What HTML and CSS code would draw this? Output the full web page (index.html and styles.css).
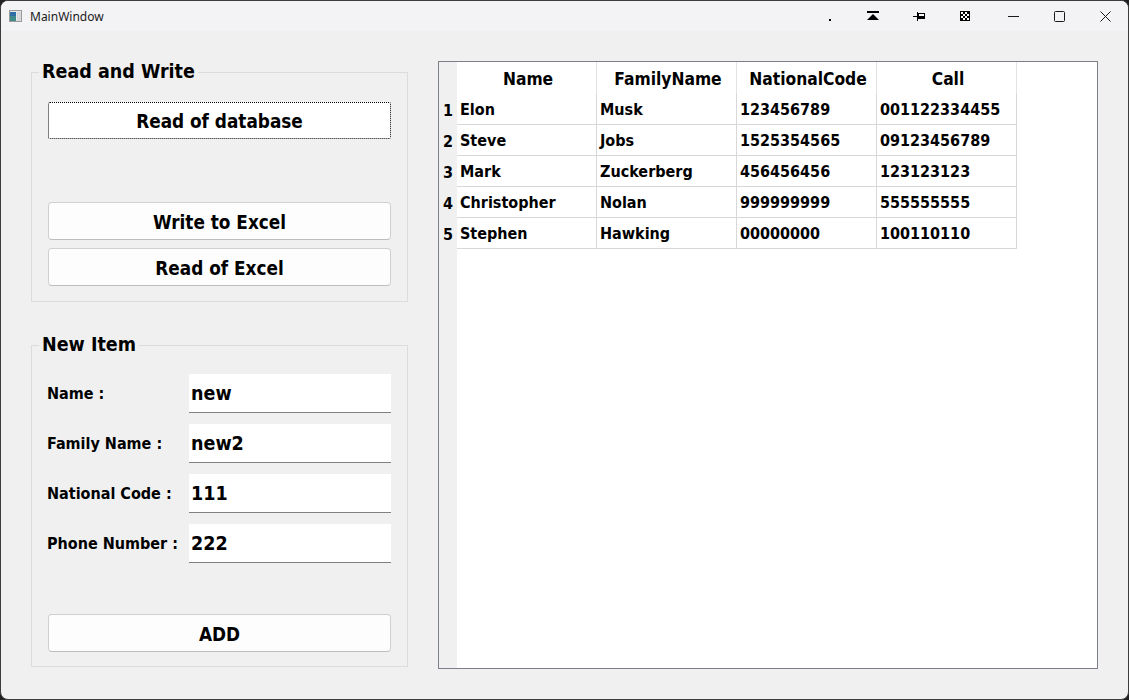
FILE: index.html
```html
<!DOCTYPE html>
<html>
<head>
<meta charset="utf-8">
<title>MainWindow</title>
<link rel="stylesheet" href="styles.css">
</head>
<body>
<div class="window">
  <div class="titlebar">
    <svg class="app-icon" width="13" height="12" viewBox="0 0 13 12">
      <rect x="0.5" y="0.5" width="12" height="11" fill="#e8e8e8" stroke="#9a9a9a"/>
      <rect x="1" y="2" width="6" height="9" fill="#3f8c8a"/>
      <rect x="1" y="2" width="6" height="4" fill="#2f6fa8"/>
      <rect x="8" y="2" width="4" height="9" fill="#d8d8d8"/>
    </svg>
    <span class="title">MainWindow</span>
    <div class="spacer"></div>
    <div class="tb-btn w40"><svg width="2" height="2" class="dot"><rect width="2" height="2" fill="#000"/></svg></div>
    <div class="tb-btn"><svg width="12" height="10" viewBox="0 0 12 10"><rect x="0" y="0" width="12" height="2" fill="#000"/><polygon points="6,3 12,9 0,9" fill="#000"/></svg></div>
    <div class="tb-btn"><svg width="12" height="9" viewBox="0 0 12 9"><rect x="0" y="4" width="4" height="1" fill="#000"/><rect x="4" y="0" width="1" height="9" fill="#000"/><rect x="5" y="1" width="7" height="6" fill="#000"/><rect x="6" y="2" width="5" height="2" fill="#fff"/></svg></div>
    <div class="tb-btn"><svg width="10" height="10" viewBox="0 0 10 10"><rect x="0" y="0" width="10" height="10" fill="#000"/><rect x="1" y="1" width="2" height="2" fill="#fff"/><rect x="5" y="1" width="2" height="2" fill="#fff"/><rect x="3" y="3" width="2" height="2" fill="#fff"/><rect x="7" y="3" width="2" height="2" fill="#fff"/><rect x="1" y="5" width="2" height="2" fill="#fff"/><rect x="5" y="5" width="2" height="2" fill="#fff"/><rect x="3" y="7" width="2" height="2" fill="#fff"/><rect x="7" y="7" width="2" height="2" fill="#fff"/></svg></div>
    <div class="tb-gap"></div>
    <div class="tb-btn"><svg width="11" height="11" viewBox="0 0 11 11"><line x1="0" y1="5.5" x2="11" y2="5.5" stroke="#1a1a1a" stroke-width="1"/></svg></div>
    <div class="tb-btn"><svg width="11" height="11" viewBox="0 0 11 11"><rect x="0.5" y="0.5" width="10" height="10" rx="1" fill="none" stroke="#1a1a1a" stroke-width="1"/></svg></div>
    <div class="tb-btn"><svg width="11" height="11" viewBox="0 0 11 11"><path d="M0.5 0.5 L10.5 10.5 M10.5 0.5 L0.5 10.5" stroke="#1a1a1a" stroke-width="1"/></svg></div>
  </div>
  <div class="content">
    <div class="left">
      <div class="group group-rw">
        <div class="group-title">Read and Write</div>
        <button class="btn focus">Read of database</button>
        <div class="btn-stack">
          <button class="btn">Write to Excel</button>
          <button class="btn">Read of Excel</button>
        </div>
      </div>
      <div class="group group-new">
        <div class="group-title">New Item</div>
        <div class="form">
          <div class="form-row"><span class="label">Name :</span><span class="input">new</span></div>
          <div class="form-row"><span class="label">Family Name :</span><span class="input">new2</span></div>
          <div class="form-row"><span class="label">National Code :</span><span class="input">111</span></div>
          <div class="form-row"><span class="label">Phone Number :</span><span class="input">222</span></div>
        </div>
        <button class="btn">ADD</button>
      </div>
    </div>
    <div class="table-view">
      <div class="grid">
        <div class="corner"></div>
        <div class="hcell">Name</div>
        <div class="hcell">FamilyName</div>
        <div class="hcell">NationalCode</div>
        <div class="hcell">Call</div>

        <div class="rnum">1</div>
        <div class="cell">Elon</div><div class="cell">Musk</div><div class="cell">123456789</div><div class="cell">001122334455</div>

        <div class="rnum">2</div>
        <div class="cell">Steve</div><div class="cell">Jobs</div><div class="cell">1525354565</div><div class="cell">09123456789</div>

        <div class="rnum">3</div>
        <div class="cell">Mark</div><div class="cell">Zuckerberg</div><div class="cell">456456456</div><div class="cell">123123123</div>

        <div class="rnum">4</div>
        <div class="cell">Christopher</div><div class="cell">Nolan</div><div class="cell">999999999</div><div class="cell">555555555</div>

        <div class="rnum">5</div>
        <div class="cell">Stephen</div><div class="cell">Hawking</div><div class="cell">00000000</div><div class="cell">100110110</div>
      </div>
    </div>
  </div>
</div>
</body>
</html>
```
FILE: styles.css
```css
* { box-sizing: border-box; }
html, body { margin: 0; padding: 0; background: #202020; }
body { width: 1129px; height: 700px; overflow: hidden; }

.window {
  width: 1129px;
  height: 700px;
  border: 1px solid #3c3c3c;
  border-radius: 8px;
  overflow: hidden;
  background: #f0f0f0;
  display: flex;
  flex-direction: column;
  font-family: "DejaVu Sans Condensed", "DejaVu Sans", sans-serif;
  font-weight: bold;
  color: #000;
}

.titlebar {
  height: 30px;
  flex: none;
  background: #f3f3f6;
  display: flex;
  align-items: center;
  font-family: "Noto Sans", "Open Sans", sans-serif;
  font-weight: normal;
}
.app-icon { margin-left: 8px; flex: none; }
.title { margin-left: 8px; font-size: 12px; color: #1a1a1a; }
.spacer { flex: 1; }
.tb-btn {
  width: 46px;
  height: 30px;
  display: flex;
  align-items: center;
  justify-content: center;
  flex: none;
}
.tb-btn.w40 { width: 40px; }
.dot { margin-top: 8px; }
.tb-gap { width: 2px; flex: none; }

.content {
  flex: 1;
  display: flex;
  padding: 30px;
  gap: 30px;
}

.left {
  width: 377px;
  flex: none;
  display: flex;
  flex-direction: column;
}

.group {
  position: relative;
  border: 1px solid #dcdcdc;
  padding: 0 16px;
  display: flex;
  flex-direction: column;
}
.group-title {
  position: absolute;
  left: 7px;
  top: -12px;
  padding: 0 3px;
  background: #f0f0f0;
  font-size: 19.5px;
  line-height: 22px;
}
.group-rw {
  margin-top: 11px;
  height: 230px;
  padding-top: 29px;
}
.group-new {
  margin-top: 43px;
  height: 322px;
  padding-top: 28px;
}

.btn {
  font-family: inherit;
  font-weight: bold;
  font-size: 18.8px;
  color: #000;
  height: 38px;
  width: 100%;
  background: #fdfdfd;
  border: 1px solid #d0d0d0;
  border-bottom-color: #bdbdbd;
  border-radius: 4px;
  padding: 2px 0 0;
}
.btn.focus {
  height: 37px;
  background: #ffffff;
  border: 1px dotted #000;
  border-radius: 2px;
}
.btn-stack {
  margin-top: 63px;
  display: flex;
  flex-direction: column;
  gap: 8px;
}

.form {
  display: flex;
  flex-direction: column;
  gap: 11px;
}
.form-row {
  display: flex;
  align-items: center;
  height: 39px;
}
.label {
  width: 141px;
  flex: none;
  font-size: 16px;
  margin-left: -1px;
}
.input {
  flex: 1;
  height: 39px;
  background: #fff;
  border-bottom: 1px solid #808080;
  font-size: 19.5px;
  display: flex;
  align-items: center;
  padding-left: 2px;
  margin-left: 1px;
}
.group-new .btn { margin-top: 51px; }

.table-view {
  flex: 1;
  border: 1px solid #7b7f87;
  background: linear-gradient(to right, #f0f0f0 18px, #ffffff 18px);
}
.grid {
  display: grid;
  grid-template-columns: 18px repeat(4, 140px);
  grid-template-rows: 32px repeat(5, 31px);
  font-size: 16px;
}
.corner { background: #f0f0f0; }
.hcell {
  display: flex;
  align-items: center;
  justify-content: center;
  border-right: 1px solid #e3e3e3;
  background: #fff;
  font-size: 17.3px;
  padding: 1px 0 0 3px;
}
.rnum {
  display: flex;
  align-items: center;
  justify-content: center;
  padding-top: 1px;
}
.cell {
  display: flex;
  align-items: center;
  padding-left: 3px;
  padding-top: 1px;
  border-right: 1px solid #d8d8d8;
  border-bottom: 1px solid #d8d8d8;
  background: #fff;
  white-space: nowrap;
}
```
